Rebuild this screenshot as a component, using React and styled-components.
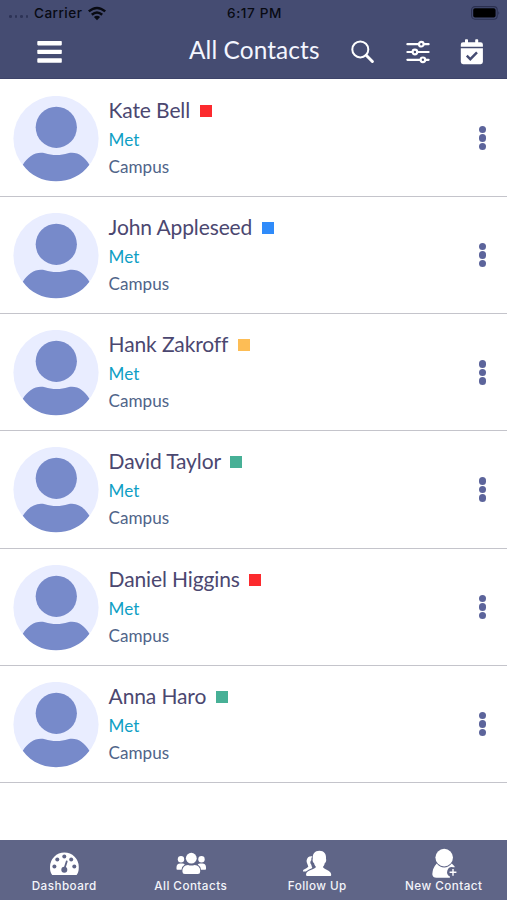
import styled, { createGlobalStyle } from 'styled-components';

const GlobalStyle = createGlobalStyle`
*{
  box-sizing: border-box;
}
body{
  margin: 0;
  background: #fff;
}
svg{
  display: block;
  flex: none;
}
`;

const Screen = styled.div`
display: flex;
flex-direction: column;
width: 507px;
height: 900px;
overflow: hidden;
background: #fff;
font-family: Lato, sans-serif;
`;
const Header = styled.header`
height: 79px;
flex: none;
background: #454c72;
border-bottom: 1px solid #3d4369;
`;
const StatusBar = styled.div`
display: grid;
grid-template-columns: 1fr auto 1fr;
align-items: center;
height: 26px;
padding: 0 6px 0 9px;
font: 500 13.6px Inter, sans-serif;
color: #080a12;
`;
const Carrier = styled.div`
display: flex;
align-items: center;
letter-spacing: 0.45px;
`;
const CarrierName = styled.span`
margin-right: 5px;
`;
const Signal = styled.span`
display: flex;
gap: 3px;
margin: 7px 6px 0 0;
i{
  width: 2.5px;
  height: 2.5px;
  border-radius: 50%;
  background: #2d3356;
}
`;
const Clock = styled.div`
padding-right: 1px;
letter-spacing: 0.6px;
`;
const BatterySlot = styled.div`
justify-self: end;
`;
const Toolbar = styled.div`
display: flex;
align-items: center;
height: 52px;
padding: 0 23px 0 37px;
`;
const Title = styled.h1`
margin: 0 0 4px 127px;
width: 162px;
font-size: 24.4px;
font-weight: 400;
line-height: 30px;
letter-spacing: 0.1px;
white-space: nowrap;
color: #f4f6ff;
`;
const Actions = styled.div`
display: flex;
align-items: center;
gap: 30.5px;
`;
const List = styled.main`
flex: 1;
padding-top: 0.6px;
`;
const Row = styled.article`
display: flex;
height: 117.25px;
padding: 16px 20.7px 0 13px;
border-bottom: 1px solid #c4c4cb;
`;
const Info = styled.div`
flex: 1;
padding-left: 9.6px;
`;
const Name = styled.h2`
display: flex;
align-items: center;
gap: 9.5px;
margin: -1.5px 0 1.5px;
height: 30px;
font-size: 21px;
font-weight: 400;
letter-spacing: -0.12px;
color: #4b4770;
`;
const Flag = styled.span`
width: 12px;
height: 12px;
margin-top: 3px;
background: ${({ $color }) => $color};
`;
const Detail = styled.p`
margin: 0;
height: 27px;
line-height: 27px;
font-size: 17.1px;
color: ${({ $color }) => $color};
`;
const More = styled.div`
display: flex;
flex-direction: column;
gap: 1px;
padding-top: 30px;
i{
  width: 7.5px;
  height: 7.5px;
  border-radius: 50%;
  background: #5c649b;
}
`;
const TabBar = styled.nav`
display: grid;
grid-template-columns: repeat(4, 1fr);
height: 60px;
flex: none;
padding-left: 1px;
background: #5f6587;
`;
const Tab = styled.div`
display: flex;
flex-direction: column;
align-items: center;
padding-top: 8px;
font: 500 11.7px/14px Inter, sans-serif;
letter-spacing: 0.45px;
color: #f3f4fa;
svg{
  margin-bottom: 1px;
}
`;

const contacts = [
  { name: 'Kate Bell', flag: '#fc2a2e' },
  { name: 'John Appleseed', flag: '#2f8bfa' },
  { name: 'Hank Zakroff', flag: '#fdbd55' },
  { name: 'David Taylor', flag: '#47b096' },
  { name: 'Daniel Higgins', flag: '#fc2a2e' },
  { name: 'Anna Haro', flag: '#47b096' },
];

const WifiIcon = () => (
  <svg width="20" height="15" viewBox="0 0 20 15" fill="none" stroke="#080a12" strokeWidth="2.5">
    <path d="M1.8 5.4Q10-1.5 18.2 5.4" />
    <path d="M4.8 8.7Q10 4.3 15.2 8.7" />
    <path d="M10 14.2L6.9 11.1Q10 8.6 13.1 11.1Z" fill="#080a12" stroke="none" />
  </svg>
);

const BatteryIcon = () => (
  <svg width="30" height="14" viewBox="0 0 30 14">
    <rect x="0.6" y="0.6" width="25.6" height="12.6" rx="3.4" fill="none" stroke="#2b3050" strokeWidth="1.1" />
    <rect x="2.2" y="2.2" width="22.4" height="9.4" rx="1.8" fill="#000" />
    <path d="M27.4 5q1.8 2 0 4z" fill="#2b3050" />
  </svg>
);

const MenuIcon = () => (
  <svg width="25" height="22" viewBox="0 0 25 22" fill="#fff">
    <rect x="0.3" y="0" width="24.5" height="4.4" rx="0.8" />
    <rect x="0.3" y="8.8" width="24.5" height="4.2" rx="0.8" />
    <rect x="0.3" y="17.3" width="24.5" height="4.4" rx="0.8" />
  </svg>
);

const SearchIcon = () => (
  <svg width="24" height="24" viewBox="0 0 24 24" fill="none" stroke="#fff" strokeLinecap="round">
    <circle cx="9.3" cy="9.4" r="8" strokeWidth="2" />
    <path d="M15.2 15.3L21.4 21.5" strokeWidth="3" />
  </svg>
);

const SlidersIcon = () => (
  <svg width="24" height="24" viewBox="0 0 24 24" fill="none" stroke="#fff" strokeWidth="2.2">
    <path d="M1.4 4.2h11M18.2 4.2h4.4M1.4 12H6M11.8 12h10.8M1.4 19.8H14M19.8 19.8h2.8" strokeLinecap="round" />
    <circle cx="15.3" cy="4.2" r="2.3" />
    <circle cx="8.9" cy="12" r="2.3" />
    <circle cx="16.9" cy="19.8" r="2.3" />
  </svg>
);

const CalendarIcon = () => (
  <svg width="24" height="26" viewBox="0 0 24 26" fill="#fff">
    <path d="M0.8 7.8V5.5Q0.8 3.2 3.1 3.2H5V1.1Q5 0.3 5.8 0.3H7.2Q8 0.3 8 1.1V3.2H15.2V1.1Q15.2 0.3 16 0.3H17.4Q18.2 0.3 18.2 1.1V3.2H20.6Q22.9 3.2 22.9 5.5V7.8Z" />
    <path d="M0.8 9.2H22.9V22.8Q22.9 25.2 20.6 25.2H3.1Q0.8 25.2 0.8 22.8Z" />
    <path d="M6.8 16.7L10.3 20.2L17 13.3" fill="none" stroke="#454c72" strokeWidth="2.4" />
  </svg>
);

const Avatar = () => (
  <svg width="86" height="86" viewBox="0 0 86 86">
    <circle cx="43" cy="42.5" r="42.6" fill="#e9edff" />
    <circle cx="43.3" cy="31.3" r="20.6" fill="#778aca" />
    <path d="M9.8 68.7C15.5 60.2 23 55.2 32 57.3C39 59.7 48 59.7 55 57.3C64 55.2 71 60.2 76.4 68.7C68.6 79.5 56.5 85.2 43 85.2C29.5 85.2 17.6 79.5 9.8 68.7Z" fill="#778aca" />
  </svg>
);

const DashboardIcon = () => (
  <svg width="30" height="30" viewBox="0 0 30 30">
    <path d="M3.2 26.9Q1 24.5 1 19A14.4 14.4 0 0 1 29.8 19Q29.8 24.5 27.6 26.9Z" fill="#fff" />
    <g fill="#5f6587">
      <circle cx="5.4" cy="18.6" r="2" />
      <circle cx="8.3" cy="11.5" r="2" />
      <circle cx="15.3" cy="8.5" r="2" />
      <circle cx="22.2" cy="11.5" r="2" />
      <circle cx="25.3" cy="18.6" r="2" />
      <circle cx="15.3" cy="21.7" r="3" />
    </g>
    <path d="M15.5 20.6L17.7 13.4" stroke="#5f6587" strokeWidth="1.8" strokeLinecap="round" />
  </svg>
);

const GroupIcon = () => (
  <svg width="30" height="30" viewBox="0 0 30 30" fill="#fff">
    <circle cx="5" cy="11.3" r="3.2" />
    <circle cx="25.5" cy="11.3" r="3.2" />
    <path d="M0.5 21V19.2Q0.5 15.4 4.2 15.4H6.4Q8 15.4 8.8 16.4Q5.8 18.2 5.5 21.8H1.3Q0.5 21.8 0.5 21ZM30 21V19.2Q30 15.4 26.3 15.4H24.1Q22.5 15.4 21.7 16.4Q24.7 18.2 25 21.8H29.2Q30 21.8 30 21Z" />
    <circle cx="15.3" cy="10.2" r="5.4" />
    <path d="M6.4 23.4Q6.4 16.9 12 16.9Q15.3 18.2 18.6 16.9Q24.2 16.9 24.2 23.4Q24.2 25.9 21.8 25.9H8.8Q6.4 25.9 6.4 23.4Z" />
  </svg>
);

const FollowIcon = () => (
  <svg width="30" height="30" viewBox="0 0 30 30" fill="#fff">
    <path d="M10.3 8.2Q5.3 7.7 4.6 12.5C4.2 14.2 6 17 6.3 18.7Q5 20.3 1.5 21.7Q0.9 22.2 1 23.5H3.9Q6 21.5 10.3 20Q9.7 18 9.2 16.5Q8.2 15.6 8.3 14.2Q8.5 12.6 9.3 12.3Q9 10.1 10.3 8.2Z" />
    <path d="M17.4 2.8C12.8 2.8 10.3 6 10.8 10.7C10.2 12.5 10.8 14.4 12 15C12.3 17 13.2 18 14 18.8C13.4 21.7 4 21.7 4 26.8Q4 28 5.2 28H28.2Q29.4 28 29.2 26.5C28.7 21.7 21.5 21.7 20.9 18.8C21.8 18 22.5 17 22.8 15C24 14.4 24.6 12.5 24 10.7C24.5 6 22 2.8 17.4 2.8Z" />
  </svg>
);

const NewContactIcon = () => (
  <svg width="30" height="30" viewBox="0 0 30 30" fill="#fff">
    <circle cx="15.2" cy="9.6" r="8.8" />
    <path d="M7.7 15.4Q3.5 20 3.3 26.2Q3.7 29.7 7.5 29.7H20.1Q24 29.7 26.5 26V20Q25 17.3 22.7 15.4Q19.4 19.5 15.2 19.5Q10.9 19.5 7.7 15.4Z" />
    <path d="M20.9 28.6A5 5 0 0 1 24 19.2L29 19V30H21Z" fill="#5f6587" />
    <path d="M24 20.9V27.7M20.6 24.3H27.4" stroke="#fff" strokeWidth="1.4" />
  </svg>
);

function App() {
  return (
    <>
      <GlobalStyle />
      <Screen>
        <Header>
          <StatusBar>
            <Carrier>
              <Signal><i /><i /><i /><i /></Signal>
              <CarrierName>Carrier</CarrierName>
              <WifiIcon />
            </Carrier>
            <Clock>6:17 PM</Clock>
            <BatterySlot><BatteryIcon /></BatterySlot>
          </StatusBar>
          <Toolbar>
            <MenuIcon />
            <Title>All Contacts</Title>
            <Actions>
              <SearchIcon />
              <SlidersIcon />
              <CalendarIcon />
            </Actions>
          </Toolbar>
        </Header>

        <List>
          {contacts.map(({ name, flag }) => (
            <Row key={name}>
              <Avatar />
              <Info>
                <Name>{name}<Flag $color={flag} /></Name>
                <Detail $color="#0f9fc5">Met</Detail>
                <Detail $color="#506489">Campus</Detail>
              </Info>
              <More><i /><i /><i /></More>
            </Row>
          ))}
        </List>

        <TabBar>
          <Tab><DashboardIcon />Dashboard</Tab>
          <Tab><GroupIcon />All Contacts</Tab>
          <Tab><FollowIcon />Follow Up</Tab>
          <Tab><NewContactIcon />New Contact</Tab>
        </TabBar>
      </Screen>
    </>
  );
}

export default App;
